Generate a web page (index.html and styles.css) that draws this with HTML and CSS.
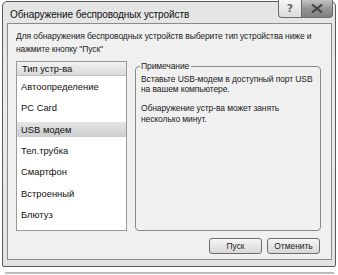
FILE: index.html
```html
<!DOCTYPE html>
<html lang="ru">
<head>
<meta charset="utf-8">
<link rel="stylesheet" href="styles.css">
</head>
<body>
<div class="window">
  <div class="titlebar">
    <span class="title">Обнаружение беспроводных устройств</span>
    <div class="caption-btns">
      <span class="cbtn help">?</span>
      <span class="cbtn close">
        <svg width="12" height="9" viewBox="0 0 12 9"><path d="M1 0.5 L11 8.5 M11 0.5 L1 8.5" stroke="#444" stroke-width="2.2"/></svg>
      </span>
    </div>
  </div>
  <div class="panel">
    <p class="intro">Для обнаружения беспроводных устройств выберите тип устройства ниже и нажмите кнопку "Пуск"</p>
    <div class="main">
      <div class="list">
        <div class="list-head">Тип устр-ва</div>
        <div class="item">Автоопределение</div>
        <div class="item">PC Card</div>
        <div class="item selected">USB модем</div>
        <div class="item">Тел.трубка</div>
        <div class="item">Смартфон</div>
        <div class="item">Встроенный</div>
        <div class="item">Блютуз</div>
      </div>
      <fieldset class="group">
        <legend>Примечание</legend>
        <p>Вставьте USB-модем в доступный порт USB на вашем компьютере.</p>
        <p>Обнаружение устр-ва может занять несколько минут.</p>
      </fieldset>
    </div>
    <div class="buttons">
      <button class="btn">Пуск</button>
      <button class="btn">Отменить</button>
    </div>
  </div>
</div>
<div class="shadow"></div>
</body>
</html>
```
FILE: styles.css
```css
html, body { margin: 0; padding: 0; background: #fff; }
body { font-family: "Liberation Sans", Arial, sans-serif; color: #222; width: 338px; height: 275px; overflow: hidden; }

.window {
  margin: 1px 0 0 2px;
  width: 334px;
  height: 266px;
  border: 1px solid #5a5a5a;
  border-radius: 5px 5px 2px 2px;
  background: linear-gradient(#e4e4e4, #ececec 40%, #e2e2e2);
  box-sizing: border-box;
  padding: 0 3px 6px 4px;
  display: flex;
  flex-direction: column;
}
.titlebar {
  height: 21px;
  display: flex;
  align-items: flex-start;
  justify-content: space-between;
}
.title {
  font-size: 10px;
  letter-spacing: -0.1px;
  padding: 7px 0 0 3px;
  color: #111;
}
.caption-btns { display: flex; margin-top: -2px; margin-right: -1px; }
.cbtn {
  height: 18px;
  border: 1px solid #6a6a6a;
  border-top: none;
  box-sizing: border-box;
  display: flex; align-items: center; justify-content: center;
}
.help {
  width: 24px;
  border-radius: 0 0 0 4px;
  background: linear-gradient(#f6f6f6, #dcdcdc);
  font-family: "DejaVu Sans", sans-serif;
  font-size: 11px; font-weight: bold; color: #666;
}
.close {
  width: 31px;
  border-left: none;
  border-radius: 0 0 4px 0;
  background: linear-gradient(#c4c4c4, #969696 50%, #808080);
}
.panel {
  flex: 1;
  border: 1px solid #8a8a8a;
  background: #f0f0f0;
  padding: 0 10px 0 8px;
  display: flex;
  flex-direction: column;
}
.intro {
  margin: 6px 0 0 0;
  font-size: 8.5px;
  letter-spacing: -0.1px;
  line-height: 13px;
  color: #222;
}
.main {
  display: flex;
  margin-top: 5px;
  gap: 8px;
  height: 170px;
}
.list {
  width: 111px;
  background: #fff;
  border: 1px solid #9a9a9a;
  box-sizing: border-box;
  font-size: 9.4px;
  color: #111;
}
.list-head {
  height: 14px;
  line-height: 13px;
  padding-left: 5px;
  background: linear-gradient(#f2f2f2, #dadada);
  border-bottom: 1px solid #bdbdbd;
  box-sizing: border-box;
}
.item {
  height: 21.33px;
  line-height: 21px;
  padding-left: 4px;
}
.item.selected {
  background: linear-gradient(transparent 3px, #e4e4e4 3px, #cdcdcd 18px, transparent 18px);
}
.group {
  flex: 1;
  margin: 0;
  border: 1px solid #8a8a8a;
  border-radius: 4px;
  padding: 2px 4px 0 5px;
  font-size: 8.5px;
  letter-spacing: -0.1px;
  line-height: 10.5px;
  color: #222;
  min-width: 0;
}
.group legend {
  padding: 0 2px 0 1px;
  margin-left: -1px;
  font-size: 8.5px;
  color: #222;
}
.group p { margin: 0 0 8.5px 0; }
.buttons {
  display: flex;
  justify-content: flex-end;
  gap: 5px;
  margin-top: 7px;
  padding-right: 1px;
}
.btn {
  width: 53px;
  height: 16px;
  padding: 0;
  font-family: inherit;
  font-size: 8.4px;
  color: #222;
  border: 1px solid #6e6e6e;
  border-radius: 3px;
  background: linear-gradient(#f6f6f6, #e6e6e6 50%, #d8d8d8);
}
.shadow {
  margin: 5px 0 0 5px;
  width: 329px;
  height: 2px;
  background: #bcbcbc;
}
```
